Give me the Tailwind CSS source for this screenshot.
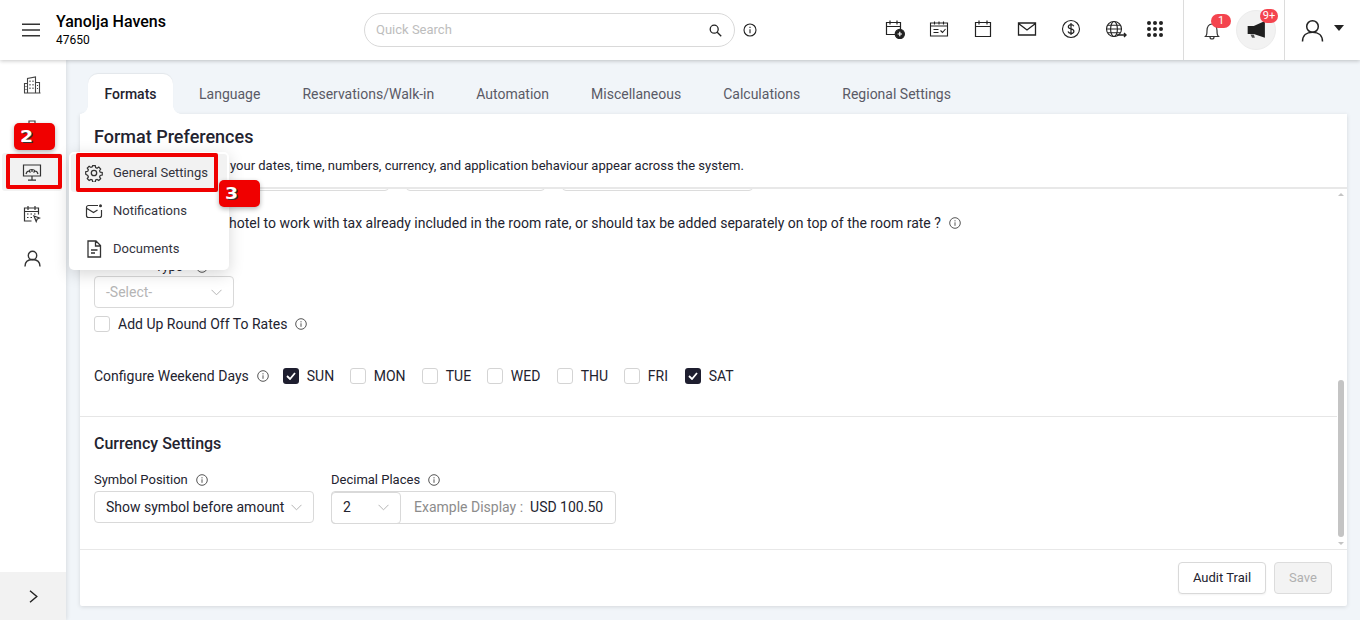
<!DOCTYPE html>
<html lang="en">
<head>
  <meta charset="UTF-8" />
  <title>General Settings</title>
  <script src="https://cdn.jsdelivr.net/npm/@tailwindcss/browser@4"></script>
</head>
<body class="font-['Roboto',sans-serif] text-[#23232f] bg-[#f1f5f9] overflow-hidden">
<div class="relative w-[1360px] h-[620px] overflow-hidden flex flex-col">

  <!-- top bar -->
  <header class="relative z-20 h-[60px] shrink-0 bg-white shadow-[0_1px_4px_rgba(0,0,0,0.22)] flex items-center">
    <div class="w-[56px] pl-[22px] shrink-0">
      <svg class="w-[18px] h-[14px] text-[#333]" viewBox="0 0 18 14" fill="none" stroke="currentColor" stroke-width="1.4"><path d="M0 1.2h18M0 7h18M0 12.8h18"/></svg>
    </div>
    <div class="w-[308px] shrink-0 text-black -mt-[2px]">
      <div class="text-[16px] leading-[20px] font-medium">Yanolja Havens</div>
      <div class="mt-[1px] text-[12px] leading-[14px]">47650</div>
    </div>
    <div class="w-[371px] h-[34px] shrink-0 border border-[#d9d9d9] rounded-full flex items-center justify-between pl-[11px] pr-[12px]">
      <span class="text-[13px] text-[#bdbdbd]">Quick Search</span>
      <svg class="w-[13px] h-[13px]" viewBox="0 0 13 13" fill="none" stroke="#222" stroke-width="1.3"><circle cx="5.2" cy="5.2" r="4"/><path d="M8.2 8.2l4 4"/></svg>
    </div>
    <svg class="ml-[8px] w-[14px] h-[14px] shrink-0" viewBox="0 0 14 14" fill="none" stroke="#222" stroke-width="1.1"><circle cx="7" cy="7" r="6"/><path d="M7 6.2v4M7 3.8v1.2"/></svg>

    <div class="w-[128px] shrink-0"></div>
    <!-- shortcuts -->
    <div class="flex items-center gap-[24px] w-[295px] shrink-0 -mt-[2px]">
      <svg class="w-[20px] h-[20px] shrink-0" viewBox="0 0 20 20" fill="none" stroke="#222" stroke-width="1.2"><path d="M10 15.5H1.5V3.5h14V10M1.5 7.5h14M5 1.5v4M12 1.5v4"/><circle cx="14.8" cy="15" r="4.6" fill="#222"/><path d="M12.6 15h4.4M14.8 12.8v4.4" stroke="#fff"/></svg>
      <svg class="w-[20px] h-[20px] shrink-0" viewBox="0 0 20 20" fill="none" stroke="#222" stroke-width="1.1"><path d="M1.5 4h17v13h-17zM1.5 7h17M5.5 2.5v3M10 2.5v3M14.5 2.5v3M4.5 10.5h5M4.5 13.5h5M11.5 11.5l2 2 3-3.5"/></svg>
      <svg class="w-[20px] h-[20px] shrink-0" viewBox="0 0 20 20" fill="none" stroke="#222" stroke-width="1.2"><path d="M2.5 3.5h15v14h-15zM2.5 7.5h15M6 1.5v4M14 1.5v4"/></svg>
      <svg class="w-[20px] h-[20px] shrink-0" viewBox="0 0 20 20" fill="none" stroke="#222" stroke-width="1.3"><path d="M1.5 4h17v12h-17zM1.5 4.5L10 11l8.5-6.5"/></svg>
      <svg class="w-[20px] h-[20px] shrink-0" viewBox="0 0 20 20" fill="none" stroke="#222" stroke-width="1.1"><circle cx="10" cy="10" r="8.5"/><path d="M12.8 7.2c-.5-1.1-1.5-1.6-2.8-1.6-1.5 0-2.7.8-2.7 2.1 0 3 5.600 1.500 5.600 4.500 0 1.300-1.300 2.200-2.900 2.200-1.400 0-2.500-.6-3-1.800M10 4v12" stroke-width="1.2"/></svg>
      <svg class="w-[22px] h-[20px] shrink-0 -mr-[2px]" viewBox="0 0 22 20" fill="none" stroke="#222" stroke-width="1.1"><circle cx="9" cy="10" r="7.5"/><ellipse cx="9" cy="10" rx="3.4" ry="7.5"/><path d="M1.5 10h15M2.5 6.3h13M2.5 13.7h13"/><path d="M12 16h9M19 14l2 2-2 2" stroke-width="1.4" fill="#fff"/></svg>
      <svg class="w-[16px] h-[16px] shrink-0 -ml-[2px]" viewBox="0 0 16 16" fill="#222"><circle cx="2" cy="2" r="2"/><circle cx="8" cy="2" r="2"/><circle cx="14" cy="2" r="2"/><circle cx="2" cy="8" r="2"/><circle cx="8" cy="8" r="2"/><circle cx="14" cy="8" r="2"/><circle cx="2" cy="14" r="2"/><circle cx="8" cy="14" r="2"/><circle cx="14" cy="14" r="2"/></svg>
    </div>

    <div class="w-[102px] h-[60px] shrink-0 border-x border-[#dcdcdc] ml-[3px] flex items-center relative">
      <div class="relative ml-[20px] w-[16px]">
        <svg class="w-[16px] h-[18px] mt-[2px]" viewBox="0 0 16 18" fill="none" stroke="#333" stroke-width="1.2"><path d="M1.5 14.5c1.5-1.2 1.5-2.500 1.500-6C3 4.500 5 2 8 2s5 2.500 5 6.500c0 3.500 0 4.800 1.500 6zM6 15c0 1.500 1 2 2 2s2-.5 2-2"/></svg>
        <span class="absolute -top-[6px] left-[7px] w-[20px] h-[14px] rounded-full bg-[#f4444e] text-white text-[11px] leading-[14px] text-center">1</span>
      </div>
      <div class="relative ml-[16px] w-[40px] h-[40px] rounded-full bg-[#f2f2f2] border border-[#ececec] flex items-center justify-center">
        <svg class="w-[20px] h-[20px]" viewBox="0 0 18 18" fill="#1f1f1f"><path d="M17 1v15L7 12.500H1.500v-7H7z"/><path d="M4 13h3l1 3H5.500z" fill="#555"/></svg>
        <span class="absolute -top-[2px] left-[23px] w-[18px] h-[14px] rounded-full bg-[#f4444e] text-white text-[11px] leading-[14px] text-center">9+</span>
      </div>
    </div>
    <div class="flex items-center pl-[16px]">
      <svg class="w-[23px] h-[23px]" viewBox="0 0 23 23" fill="none" stroke="#222" stroke-width="1.5"><circle cx="11.500" cy="7.500" r="5.800"/><path d="M1.500 22.500c0-6 4-9.200 10-9.200s10 3.200 10 9.200"/></svg>
      <span class="ml-[10px] -mt-[4px] border-x-[5px] border-x-transparent border-t-[6px] border-t-[#222]"></span>
    </div>
  </header>

  <div class="flex flex-1 min-h-0">
    <!-- left rail -->
    <aside class="w-[66px] shrink-0 bg-white shadow-[1px_0_4px_rgba(0,0,0,0.1)] flex flex-col relative z-10">
      <div class="flex flex-col items-center flex-1 text-[#333] pr-[2px]">
        <svg class="mt-[16px] w-[18px] h-[18px]" viewBox="0 0 18 18" fill="none" stroke="#444" stroke-width="1.100"><path d="M4.500 17V2.500L12.500 1v16M12.500 6.500h4V17M1.500 17V7.500h3M1 17h16.500M7 4.500v1.500M10 4.500v1.500M7 8v1.500M10 8v1.500M7 11.500V13M10 11.500V13M14.500 9v1M14.500 12v1M3 10v1M3 13v1"/></svg>
        <svg class="mt-[24px] w-[18px] h-[18px]" viewBox="0 0 18 18" fill="none" stroke="#444" stroke-width="1.200"><path d="M6 6V3h6v3M2 6h14v10H2z"/></svg>
        <div class="mt-[17px] w-[60px] h-[38px] rounded-[3px] bg-[#f2f2f2] flex items-center justify-center">
          <svg class="w-[20px] h-[19px]" viewBox="0 0 20 19" fill="none" stroke="#333" stroke-width="1.200"><path d="M1.500 2h17v11h-17zM10 13v4M6 17.200h8"/><path d="M4 11c.5-2 1.500-3 3-3 .5-2 5-2 6 0 1.500 0 2.500 1 3 3M7 8l1.500 1.500M13 8l-1.500 1.500M10 6.500V9"/></svg>
        </div>
        <svg class="mt-[14px] w-[18px] h-[18px]" viewBox="0 0 18 18" fill="none" stroke="#333" stroke-width="1.200"><path d="M8.500 16H1.500V3h14v6.500M1.500 6.500h14M5 1v4M12 1v4M4 9h1.500M7.500 9H9M11 9h1.500M4 12.500h1.500M7.500 12.500H9"/><path d="M11 11l5.500 2-2.300 1 -1 2.500z" fill="#fff"/></svg>
        <svg class="mt-[27px] w-[17px] h-[17px]" viewBox="0 0 17 17" fill="none" stroke="#333" stroke-width="1.400"><circle cx="8.500" cy="5.500" r="4.200"/><path d="M1 16.500c0-4.500 3-7 7.500-7s7.500 2.500 7.500 7"/></svg>
      </div>
      <div class="h-[48px] bg-[#f2f2f2] flex items-center justify-center">
        <svg class="w-[9px] h-[13px]" viewBox="0 0 9 13" fill="none" stroke="#222" stroke-width="1.400"><path d="M1 .8l6.800 5.700L1 12.200"/></svg>
      </div>
    </aside>

    <main class="flex-1 min-w-0 pl-[14px] pr-[13px] pt-[14px] pb-[14px] flex flex-col">
      <!-- tabs -->
      <nav class="h-[40px] shrink-0 flex items-center pl-[8px] text-[14px] text-[#5a5a66]">
        <div class="relative h-[40px] w-[85px] bg-white rounded-t-[10px] flex items-center justify-center font-medium text-[#23232f] shadow-[0_-1px_1px_rgba(0,0,0,0.06)]">
          Formats
          <span class="absolute bottom-0 -left-[8px] w-[8px] h-[8px] bg-[radial-gradient(circle_at_0_0,transparent_7.5px,#fff_8px)]"></span>
          <span class="absolute bottom-0 -right-[8px] w-[8px] h-[8px] bg-[radial-gradient(circle_at_100%_0,transparent_7.5px,#fff_8px)]"></span>
        </div>
        <div class="flex gap-[42px] ml-[26px]">
          <span>Language</span>
          <span>Reservations/Walk-in</span>
          <span>Automation</span>
          <span>Miscellaneous</span>
          <span>Calculations</span>
          <span>Regional Settings</span>
        </div>
      </nav>

      <!-- card -->
      <section class="flex-1 min-h-0 bg-white shadow-[0_1px_4px_rgba(0,0,0,0.12)] rounded-b-[2px] flex flex-col">
        <div class="h-[75px] shrink-0 border-b-2 border-[#e8e8e8] px-[14px] pt-[12px]">
          <h1 class="text-[18px] leading-[22px] font-medium">Format Preferences</h1>
          <p class="mt-[10px] pl-[136px] text-[13px] leading-[16px] whitespace-nowrap">your dates, time, numbers, currency, and application behaviour appear across the system.</p>
        </div>

        <div class="relative flex-1 min-h-0 overflow-hidden">
          <div class="pl-[14px] pr-[10px]">
            <div class="flex gap-[17px] -mt-[30px]">
              <div class="w-[295px] h-[32px] border border-[#dcdcdc] rounded-[4px]"></div>
              <div class="w-[139px] h-[32px] border border-[#dcdcdc] rounded-[4px]"></div>
              <div class="w-[191px] h-[32px] border border-[#dcdcdc] rounded-[4px]"></div>
            </div>

            <div class="mt-[23px] h-[18px] flex items-center pl-[135px] text-[14px]">
              <span>hotel to work with tax already included in the room rate, or should tax be added separately on top of the room rate ?</span>
              <svg class="ml-[8px] w-[12px] h-[12px]" viewBox="0 0 12 12" fill="none" stroke="#555"><circle cx="6" cy="6" r="5.300"/><path d="M6 5.300v3.500M6 3.200v1.200"/></svg>
            </div>

            <div class="mt-[27px] h-[16px] flex items-center pl-[61px] text-[13px]">
              <span>Type</span>
              <svg class="ml-[13px] w-[12px] h-[12px]" viewBox="0 0 12 12" fill="none" stroke="#555"><circle cx="6" cy="6" r="5.300"/><path d="M6 5.300v3.500M6 3.200v1.200"/></svg>
            </div>

            <div class="mt-[1px] w-[140px] h-[32px] border border-[#d9d9d9] rounded-[4px] flex items-center justify-between pl-[11px] pr-[11px] text-[14px] text-[#b5b5b5]">
              <span>-Select-</span>
              <svg class="w-[11px] h-[7px]" viewBox="0 0 11 7" fill="none" stroke="#b5b5b5"><path d="M.5 .8l5 5 5-5"/></svg>
            </div>

            <div class="mt-[7px] h-[18px] flex items-center text-[14px]">
              <span class="w-[16px] h-[16px] border border-[#d4d4d4] rounded-[3px]"></span>
              <span class="ml-[8px]">Add Up Round Off To Rates</span>
              <svg class="ml-[8px] w-[12px] h-[12px]" viewBox="0 0 12 12" fill="none" stroke="#555"><circle cx="6" cy="6" r="5.300"/><path d="M6 5.300v3.500M6 3.200v1.200"/></svg>
            </div>

            <div class="mt-[34px] h-[18px] flex items-center text-[14px]">
              <span>Configure Weekend Days</span>
              <svg class="ml-[8px] w-[12px] h-[12px]" viewBox="0 0 12 12" fill="none" stroke="#555"><circle cx="6" cy="6" r="5.300"/><path d="M6 5.300v3.500M6 3.200v1.200"/></svg>
              <div class="ml-[14px] flex items-center gap-[8px]">
                <span class="w-[16px] h-[16px] rounded-[3px] bg-[#1e1e2f] flex items-center justify-center"><svg class="w-[10px] h-[8px]" viewBox="0 0 10 8" fill="none" stroke="#fff" stroke-width="1.800"><path d="M1 4l3 3 5-6"/></svg></span>
                <span class="w-[36px]">SUN</span>
              </div>
              <div class="ml-[7px] flex items-center gap-[8px]">
                <span class="w-[16px] h-[16px] border border-[#d4d4d4] rounded-[3px]"></span>
                <span class="w-[40px]">MON</span>
              </div>
              <div class="ml-[8px] flex items-center gap-[8px]">
                <span class="w-[16px] h-[16px] border border-[#d4d4d4] rounded-[3px]"></span>
                <span class="w-[33px]">TUE</span>
              </div>
              <div class="ml-[8px] flex items-center gap-[8px]">
                <span class="w-[16px] h-[16px] border border-[#d4d4d4] rounded-[3px]"></span>
                <span class="w-[38px]">WED</span>
              </div>
              <div class="ml-[8px] flex items-center gap-[8px]">
                <span class="w-[16px] h-[16px] border border-[#d4d4d4] rounded-[3px]"></span>
                <span class="w-[35px]">THU</span>
              </div>
              <div class="ml-[8px] flex items-center gap-[8px]">
                <span class="w-[16px] h-[16px] border border-[#d4d4d4] rounded-[3px]"></span>
                <span class="w-[29px]">FRI</span>
              </div>
              <div class="ml-[8px] flex items-center gap-[8px]">
                <span class="w-[16px] h-[16px] rounded-[3px] bg-[#1e1e2f] flex items-center justify-center"><svg class="w-[10px] h-[8px]" viewBox="0 0 10 8" fill="none" stroke="#fff" stroke-width="1.800"><path d="M1 4l3 3 5-6"/></svg></span>
                <span>SAT</span>
              </div>
            </div>
          </div>

          <div class="mt-[31px] mr-[10px] border-t border-[#e6e6e6] pl-[14px] pt-[17px]">
            <h2 class="text-[16px] leading-[20px] font-medium">Currency Settings</h2>
            <div class="mt-[18px] flex gap-[17px]">
              <div>
                <div class="h-[16px] flex items-center text-[13px]">
                  <span>Symbol Position</span>
                  <svg class="ml-[8px] w-[12px] h-[12px]" viewBox="0 0 12 12" fill="none" stroke="#555"><circle cx="6" cy="6" r="5.300"/><path d="M6 5.300v3.500M6 3.200v1.200"/></svg>
                </div>
                <div class="mt-[3px] w-[220px] h-[32px] border border-[#d9d9d9] rounded-[4px] flex items-center justify-between pl-[11px] pr-[11px] text-[14px]">
                  <span>Show symbol before amount</span>
                  <svg class="w-[11px] h-[7px]" viewBox="0 0 11 7" fill="none" stroke="#b5b5b5"><path d="M.5 .8l5 5 5-5"/></svg>
                </div>
              </div>
              <div>
                <div class="h-[16px] flex items-center text-[13px]">
                  <span>Decimal Places</span>
                  <svg class="ml-[8px] w-[12px] h-[12px]" viewBox="0 0 12 12" fill="none" stroke="#555"><circle cx="6" cy="6" r="5.300"/><path d="M6 5.300v3.500M6 3.200v1.200"/></svg>
                </div>
                <div class="mt-[3px] w-[285px] h-[33px] border border-[#d9d9d9] rounded-[4px] flex items-center text-[14px]">
                  <div class="w-[70px] h-[32px] -ml-px border border-[#d9d9d9] rounded-[4px] flex items-center justify-between pl-[11px] pr-[11px]">
                    <span>2</span>
                    <svg class="w-[11px] h-[7px]" viewBox="0 0 11 7" fill="none" stroke="#b5b5b5"><path d="M.5 .8l5 5 5-5"/></svg>
                  </div>
                  <span class="ml-[13px] text-[#8c8c8c]">Example Display :</span>
                  <span class="ml-[7px]">USD 100.50</span>
                </div>
              </div>
            </div>
          </div>

          <!-- scrollbar -->
          <div class="absolute right-[2px] top-0 bottom-0 w-[8px]">
            <span class="absolute left-[1px] top-[4px] border-x-[3px] border-x-transparent border-b-[3px] border-b-[#c4c4c4]"></span>
            <div class="absolute left-[1px] top-[191px] w-[6px] h-[157px] rounded-[3px] bg-[#c4c4c4]"></div>
            <span class="absolute left-[1px] bottom-[4px] border-x-[3px] border-x-transparent border-t-[3px] border-t-[#c4c4c4]"></span>
          </div>
        </div>

        <div class="h-[57px] shrink-0 border-t border-[#e8e8e8] flex items-center justify-end gap-[8px] pr-[15px]">
          <button class="w-[88px] h-[32px] border border-[#d9d9d9] rounded-[4px] bg-white text-[13px] shadow-[0_1px_2px_rgba(0,0,0,0.05)]">Audit Trail</button>
          <button class="w-[58px] h-[32px] border border-[#dcdcdc] rounded-[4px] bg-[#f3f3f3] text-[13px] text-[#b0b0b0]">Save</button>
        </div>
      </section>
    </main>
  </div>

  <!-- menu flyout -->
  <div class="absolute z-30 left-[69px] top-[152px] w-[160px] h-[118px] bg-white rounded-[5px] shadow-[0_4px_16px_rgba(0,0,0,0.16)] pt-[2px] px-[2px] text-[13px] text-[#33333d]">
    <div class="h-[38px] bg-[#f2f2f2] rounded-[3px] flex items-center pl-[14px]">
      <svg class="w-[18px] h-[18px]" viewBox="0 0 18 18" fill="none" stroke="#333" stroke-width="1.300"><circle cx="9" cy="9" r="2.700"/><path d="M7.600 1h2.800l.4 2.200 1.500.7 1.900-1.200 2 2-1.200 1.900.7 1.500 2.200.4v2.800l-2.200.4-.7 1.500 1.200 1.900-2 2-1.900-1.200-1.500.7-.4 2.200H7.600l-.4-2.200-1.500-.7-1.900 1.200-2-2 1.200-1.900-.7-1.500L.1 10.400V7.600l2.200-.4.700-1.500L1.800 3.800l2-2 1.900 1.200 1.500-.7z" transform="translate(.6 .6) scale(.93)"/></svg>
      <span class="ml-[10px]">General Settings</span>
    </div>
    <div class="h-[38px] flex items-center pl-[14px]">
      <svg class="w-[18px] h-[18px]" viewBox="0 0 18 18" fill="none" stroke="#333" stroke-width="1.200"><path d="M13 3.500H3.500a2 2 0 0 0-2 2v8a2 2 0 0 0 2 2h11a2 2 0 0 0 2-2V8M2 6.500l6.500 4 4-2.500"/><circle cx="15.500" cy="3.800" r="1.500" fill="#333" stroke="none"/></svg>
      <span class="ml-[10px]">Notifications</span>
    </div>
    <div class="h-[38px] flex items-center pl-[14px]">
      <svg class="w-[18px] h-[18px]" viewBox="0 0 18 18" fill="none" stroke="#333" stroke-width="1.300"><path d="M3 1h8l4.500 4.500V17H3zM10.500 1v5h5M6 10h6.500M6 13h4"/></svg>
      <span class="ml-[10px]">Documents</span>
    </div>
  </div>

  <!-- red tutorial marks -->
  <div class="absolute z-40 left-[6px] top-[154px] w-[56px] h-[35px] border-[4px] border-[#f00000] rounded-[2px]"></div>
  <div class="absolute z-40 left-[76px] top-[153px] w-[142px] h-[39px] border-[4px] border-[#f00000] rounded-[2px]"></div>
  <div class="absolute z-40 left-[14px] top-[123px] w-[41px] h-[27px] bg-[#f00000] rounded-[5px] shadow-[0_2px_5px_rgba(0,0,0,0.3)] pl-[6px] text-white text-[15px] leading-[28px] font-black font-['DejaVu_Sans',sans-serif] [text-shadow:1px_1px_0_#333]"><span class="inline-block origin-left scale-x-125">2</span></div>
  <div class="absolute z-40 left-[219px] top-[180px] w-[41px] h-[27px] bg-[#f00000] rounded-[5px] shadow-[0_2px_5px_rgba(0,0,0,0.3)] pl-[6px] text-white text-[15px] leading-[28px] font-black font-['DejaVu_Sans',sans-serif] [text-shadow:1px_1px_0_#333]"><span class="inline-block origin-left scale-x-125">3</span></div>
</div>
</body>
</html>
